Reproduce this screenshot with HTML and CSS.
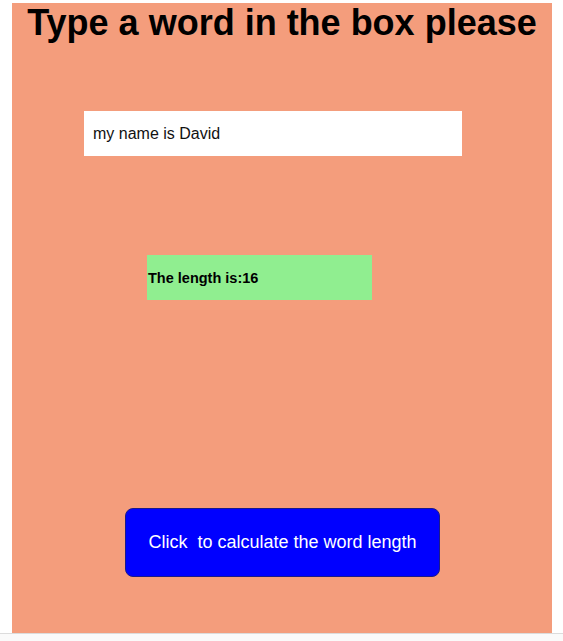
FILE: index.html
```html
<!DOCTYPE html>
<html>
<head>
<meta charset="utf-8">
<link rel="stylesheet" href="styles.css">
</head>
<body>
<div class="panel">
  <h1 class="title">Type a word in the box please</h1>
  <input class="word" type="text" value="my name is David">
  <div class="result">The length is:16</div>
  <button class="calc">Click  to calculate the word length</button>
</div>
<div class="footer"></div>
</body>
</html>
```
FILE: styles.css
```css
html, body {
  margin: 0;
  padding: 0;
  background: #ffffff;
  font-family: "Liberation Sans", Arial, sans-serif;
}
.panel {
  box-sizing: border-box;
  margin: 3px 0 0 12px;
  width: 540px;
  height: 630px;
  background: #f49d7c;
  display: flex;
  flex-direction: column;
  align-items: flex-start;
}
.title {
  align-self: stretch;
  margin: 0;
  text-align: center;
  font-size: 36px;
  line-height: 40px;
  font-weight: bold;
  color: #000;
}
.word {
  box-sizing: border-box;
  margin: 68px 0 0 72px;
  width: 378px;
  height: 45px;
  border: none;
  outline: none;
  background: #fff;
  padding: 0 9px;
  font-family: "Liberation Sans", Arial, sans-serif;
  font-size: 16px;
  color: #111;
}
.result {
  box-sizing: border-box;
  margin: 99px 0 0 135px;
  width: 225px;
  height: 45px;
  display: flex;
  align-items: center;
  padding-left: 1px;
  background: #90ee90;
  font-weight: bold;
  font-size: 14.5px;
  color: #000;
}
.calc {
  box-sizing: border-box;
  margin: 208px 0 0 113px;
  width: 315px;
  height: 69px;
  border: 1px solid #1a1a8a;
  border-radius: 8px;
  background: #0000ff;
  color: #fff;
  font-family: "Liberation Sans", Arial, sans-serif;
  font-size: 18px;
  white-space: pre;
  padding: 0;
}
.footer {
  height: 8px;
  border-top: 1px solid #dcdcdc;
  background: #fafafa;
}
```
